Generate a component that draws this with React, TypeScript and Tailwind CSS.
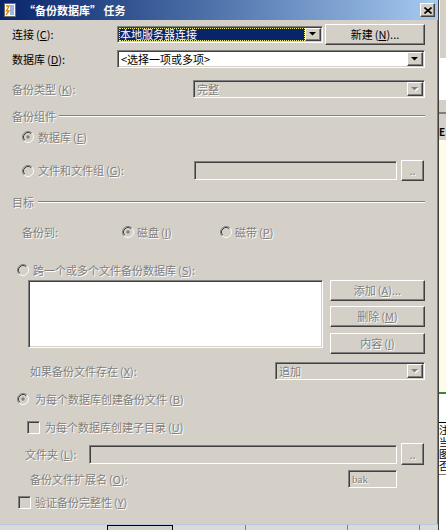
import React from "react";

const off = "text-[#808080] [text-shadow:1px_1px_0_#fff]";
const sunken =
  "border border-t-[#808080] border-l-[#808080] border-b-white border-r-white shadow-[inset_1px_1px_0_#404040,inset_-1px_-1px_0_#d4d0c8]";
const raised =
  "border border-t-white border-l-white border-b-[#404040] border-r-[#404040] shadow-[inset_-1px_-1px_0_#808080]";

function Key({ k }: { k: string }) {
  return (
    <span className="ml-[2px]">
      (<u>{k}</u>)
    </span>
  );
}

function Radio({ checked }: { checked?: boolean }) {
  return (
    <svg width="12" height="12" viewBox="0 0 12 12" className="shrink-0">
      <circle cx="6" cy="6" r="4" fill="#d4d0c8" />
      <path d="M2.11 9.89A5.5 5.5 0 0 1 9.89 2.11" fill="none" stroke="#808080" />
      <path d="M9.89 2.11A5.5 5.5 0 0 1 2.11 9.89" fill="none" stroke="#fff" />
      <path d="M2.82 9.18A4.5 4.5 0 0 1 9.18 2.82" fill="none" stroke="#404040" />
      <path d="M9.18 2.82A4.5 4.5 0 0 1 2.82 9.18" fill="none" stroke="#d4d0c8" />
      {checked && <circle cx="6" cy="6" r="1.7" fill="#808080" />}
    </svg>
  );
}

function Check() {
  return <div className={`w-[13px] h-[13px] shrink-0 bg-[#d4d0c8] ${sunken}`} />;
}

function Drop({ disabled }: { disabled?: boolean }) {
  return (
    <div className={`w-[16px] shrink-0 bg-[#d4d0c8] ${raised} flex items-center justify-center`}>
      <svg width="8" height="5" viewBox="0 0 8 5">
        {disabled && <path d="M1 1h7L4.5 4.5z" fill="#fff" />}
        <path d="M0 0h7L3.5 3.5z" fill={disabled ? "#808080" : "#000"} />
      </svg>
    </div>
  );
}

function Combo({
  className,
  disabled,
  children,
}: {
  className: string;
  disabled?: boolean;
  children: React.ReactNode;
}) {
  return (
    <div className={`${sunken} flex p-[1px] ${disabled ? "bg-[#d4d0c8]" : "bg-white"} ${className}`}>
      <div className="flex-1 flex min-w-0">{children}</div>
      <Drop disabled={disabled} />
    </div>
  );
}

function Btn({ className, children }: { className: string; children: React.ReactNode }) {
  return (
    <div className={`${raised} bg-[#d4d0c8] flex items-center justify-center shrink-0 ${className}`}>
      {children}
    </div>
  );
}

function Group({ label, lineMl }: { label: string; lineMl: string }) {
  return (
    <div className="flex items-center h-[16px]">
      <span className={off}>{label}</span>
      <div className={`flex-1 h-0 border-t border-t-[#808080] border-b border-b-white ${lineMl}`} />
    </div>
  );
}

export default function App() {
  return (
    <div className="flex w-[446px] h-[530px] overflow-hidden bg-[#d4d0c8] font-['Noto_Sans_CJK_SC','Liberation_Sans',sans-serif] text-[11px] leading-none">
      {/* dialog */}
      <div className="w-[439px] h-full flex flex-col border-r border-r-[#404040] shadow-[inset_-1px_0_0_#808080]">
        {/* title bar */}
        <div className="h-[20px] shrink-0 flex items-center pl-[2px] pr-[3px] bg-linear-to-r from-[#0a246a] to-[#a6caf0]">
          <svg width="16" height="16" viewBox="0 0 16 16" className="shrink-0">
            <rect x="2.5" y="1.5" width="11" height="13" fill="#fff" stroke="#6b6b6b" />
            <path d="M8 4h4M8 6h4M8 8h4M8 10h4M8 12h4" stroke="#3a6ad0" />
            <path d="M4 4h3L4.5 9H7L4 13" fill="none" stroke="#e08a00" strokeWidth="1.4" />
          </svg>
          <span className="ml-[6px] text-white font-bold">“备份数据库” 任务</span>
          <div className={`ml-auto w-[15px] h-[14px] bg-[#d4d0c8] ${raised} flex items-center justify-center`}>
            <svg width="8" height="7" viewBox="0 0 8 7">
              <path d="M0.5 0.5L7.5 6.5M7.5 0.5L0.5 6.5" stroke="#000" strokeWidth="1.6" />
            </svg>
          </div>
        </div>

        {/* content */}
        <div className="flex-1 flex flex-col pl-[12px] pr-[13px]">
          {/* 连接 */}
          <div className="flex items-center h-[21px] mt-[4px]">
            <span className="w-[105px] shrink-0">
              连接<Key k="C" />:
            </span>
            <Combo className="w-[206px] h-[17px]">
              <div className="flex-1 bg-[#0a246a] text-white flex items-center pl-[1px] outline outline-1 outline-dotted outline-[#f0f080] -outline-offset-1">
                本地服务器连接
              </div>
            </Combo>
            <Btn className="ml-[2px] w-[100px] h-[21px]">
              新建<Key k="N" />...
            </Btn>
          </div>

          {/* 数据库 */}
          <div className="flex items-center h-[18px] mt-[5px]">
            <span className="w-[105px] shrink-0">
              数据库<Key k="D" />:
            </span>
            <Combo className="w-[308px] h-[18px]">
              <div className="flex items-center pl-[2px]">&lt;选择一项或多项&gt;</div>
            </Combo>
          </div>

          {/* 备份类型 */}
          <div className="flex items-center h-[18px] mt-[12px]">
            <span className={`w-[181px] shrink-0 ${off}`}>
              备份类型<Key k="K" />:
            </span>
            <Combo className="w-[232px] h-[18px]" disabled>
              <div className={`flex items-center pl-[2px] ${off}`}>完整</div>
            </Combo>
          </div>

          <div className="mt-[10px]">
            <Group label="备份组件" lineMl="ml-[3px]" />
          </div>

          {/* 数据库 radio */}
          <div className="flex items-center h-[16px] mt-[5px] pl-[10px]">
            <Radio checked />
            <span className={`ml-[4px] ${off}`}>
              数据库<Key k="E" />
            </span>
          </div>

          {/* 文件和文件组 */}
          <div className="flex items-center h-[21px] mt-[15px]">
            <div className="w-[182px] shrink-0 flex items-center pl-[10px]">
              <Radio />
              <span className={`ml-[4px] ${off}`}>
                文件和文件组<Key k="G" />:
              </span>
            </div>
            <div className={`w-[203px] h-[19px] bg-[#d4d0c8] ${sunken}`} />
            <Btn className={`ml-[4px] w-[23px] h-[21px] ${off}`}>..</Btn>
          </div>

          <div className="mt-[13px]">
            <Group label="目标" lineMl="ml-[4px]" />
          </div>

          {/* 备份到 */}
          <div className="flex items-center h-[16px] mt-[14px]">
            <span className={`w-[110px] shrink-0 pl-[10px] ${off}`}>备份到:</span>
            <div className="w-[98px] shrink-0 flex items-center">
              <Radio checked />
              <span className={`ml-[3px] ${off}`}>
                磁盘<Key k="I" />
              </span>
            </div>
            <Radio />
            <span className={`ml-[3px] ${off}`}>
              磁带<Key k="P" />
            </span>
          </div>

          {/* 跨一个 */}
          <div className="flex items-center h-[16px] mt-[22px] pl-[5px]">
            <Radio />
            <span className={`ml-[4px] ${off}`}>
              跨一个或多个文件备份数据库<Key k="S" />:
            </span>
          </div>

          {/* list + buttons */}
          <div className="flex items-start mt-[2px]">
            <div className={`ml-[16px] w-[295px] h-[68px] bg-white ${sunken}`} />
            <div className="ml-[7px] w-[95px] flex flex-col">
              <Btn className={`h-[21px] ${off}`}>
                添加<Key k="A" />...
              </Btn>
              <Btn className={`h-[21px] mt-[5px] ${off}`}>
                删除<Key k="M" />
              </Btn>
              <Btn className={`h-[21px] mt-[6px] ${off}`}>
                内容<Key k="I" />
              </Btn>
            </div>
          </div>

          {/* 如果备份文件存在 */}
          <div className="flex items-center h-[18px] mt-[8px]">
            <span className={`w-[263px] shrink-0 pl-[18px] ${off}`}>
              如果备份文件存在<Key k="X" />:
            </span>
            <Combo className="w-[150px] h-[18px]" disabled>
              <div className={`flex items-center pl-[2px] ${off}`}>追加</div>
            </Combo>
          </div>

          {/* 为每个数据库创建备份文件 */}
          <div className="flex items-center h-[16px] mt-[11px] pl-[5px]">
            <Radio checked />
            <span className={`ml-[6px] ${off}`}>
              为每个数据库创建备份文件<Key k="B" />
            </span>
          </div>

          {/* 子目录 */}
          <div className="flex items-center h-[16px] mt-[12px] pl-[15px]">
            <Check />
            <span className={`ml-[5px] ${off}`}>
              为每个数据库创建子目录<Key k="U" />
            </span>
          </div>

          {/* 文件夹 */}
          <div className="flex items-center h-[22px] mt-[8px]">
            <span className={`w-[77px] shrink-0 pl-[13px] ${off}`}>
              文件夹<Key k="L" />:
            </span>
            <div className={`w-[308px] h-[19px] bg-[#d4d0c8] ${sunken}`} />
            <Btn className={`ml-[4px] w-[23px] h-[22px] ${off}`}>..</Btn>
          </div>

          {/* 扩展名 */}
          <div className="flex items-center h-[18px] mt-[5px]">
            <span className={`w-[336px] shrink-0 pl-[18px] ${off}`}>
              备份文件扩展名<Key k="O" />:
            </span>
            <div
              className={`w-[49px] h-[18px] bg-[#d4d0c8] ${sunken} flex items-center pl-[3px] font-['Liberation_Serif',serif] ${off}`}
            >
              bak
            </div>
          </div>

          {/* 验证 */}
          <div className="flex items-center h-[16px] mt-[6px] pl-[6px]">
            <Check />
            <span className={`ml-[4px] ${off}`}>
              验证备份完整性<Key k="Y" />
            </span>
          </div>
        </div>

        {/* bottom edge */}
        <div className="h-[6px] shrink-0 flex border-t border-t-[#b4c8e6] bg-[#dcdad4]">
          <div className="ml-[107px] w-[66px] border-t border-x border-black bg-[#d4d0c8]" />
          <div className="ml-[72px] w-[6px] border-l border-[#808080]" />
          <div className="ml-[96px] w-[6px] border-l border-[#808080]" />
          <div className="ml-[66px] w-[6px] border-l border-[#808080]" />
        </div>
      </div>

      {/* neighbouring window sliver */}
      <div className="w-[7px] h-full flex flex-col overflow-hidden">
        <div className="h-[58px] shrink-0 bg-[#d4d0c8] border-l border-l-white" />
        <div className="h-[42px] shrink-0 bg-white" />
        <div className="h-[12px] shrink-0 bg-[#d4d0c8]" />
        <div className="h-[2px] shrink-0 bg-[#808080]" />
        <div className="h-[10px] shrink-0 bg-[#d4d0c8]" />
        <div className="h-[16px] shrink-0 bg-[#d4d0c8] overflow-hidden flex items-center font-bold text-[10px] text-black whitespace-nowrap">
          E:
        </div>
        <div className="h-[252px] shrink-0 bg-[#fffbe8]" />
        <div className="h-[2px] shrink-0 bg-[#3a8a2a]" />
        <div className="h-[28px] shrink-0 bg-white" />
        <div className="h-[52px] shrink-0 bg-white border-t border-t-black overflow-hidden flex flex-col whitespace-nowrap text-black text-[10px] pt-[1px]">
          <span className="h-[12px] leading-[12px] overflow-hidden">注</span>
          <span className="h-[12px] leading-[12px] overflow-hidden">当</span>
          <span className="h-[12px] leading-[12px] overflow-hidden">图</span>
          <span className="h-[12px] leading-[12px] overflow-hidden">否</span>
        </div>
        <div className="flex-1 bg-white border-t border-t-[#808080]" />
      </div>
    </div>
  );
}
